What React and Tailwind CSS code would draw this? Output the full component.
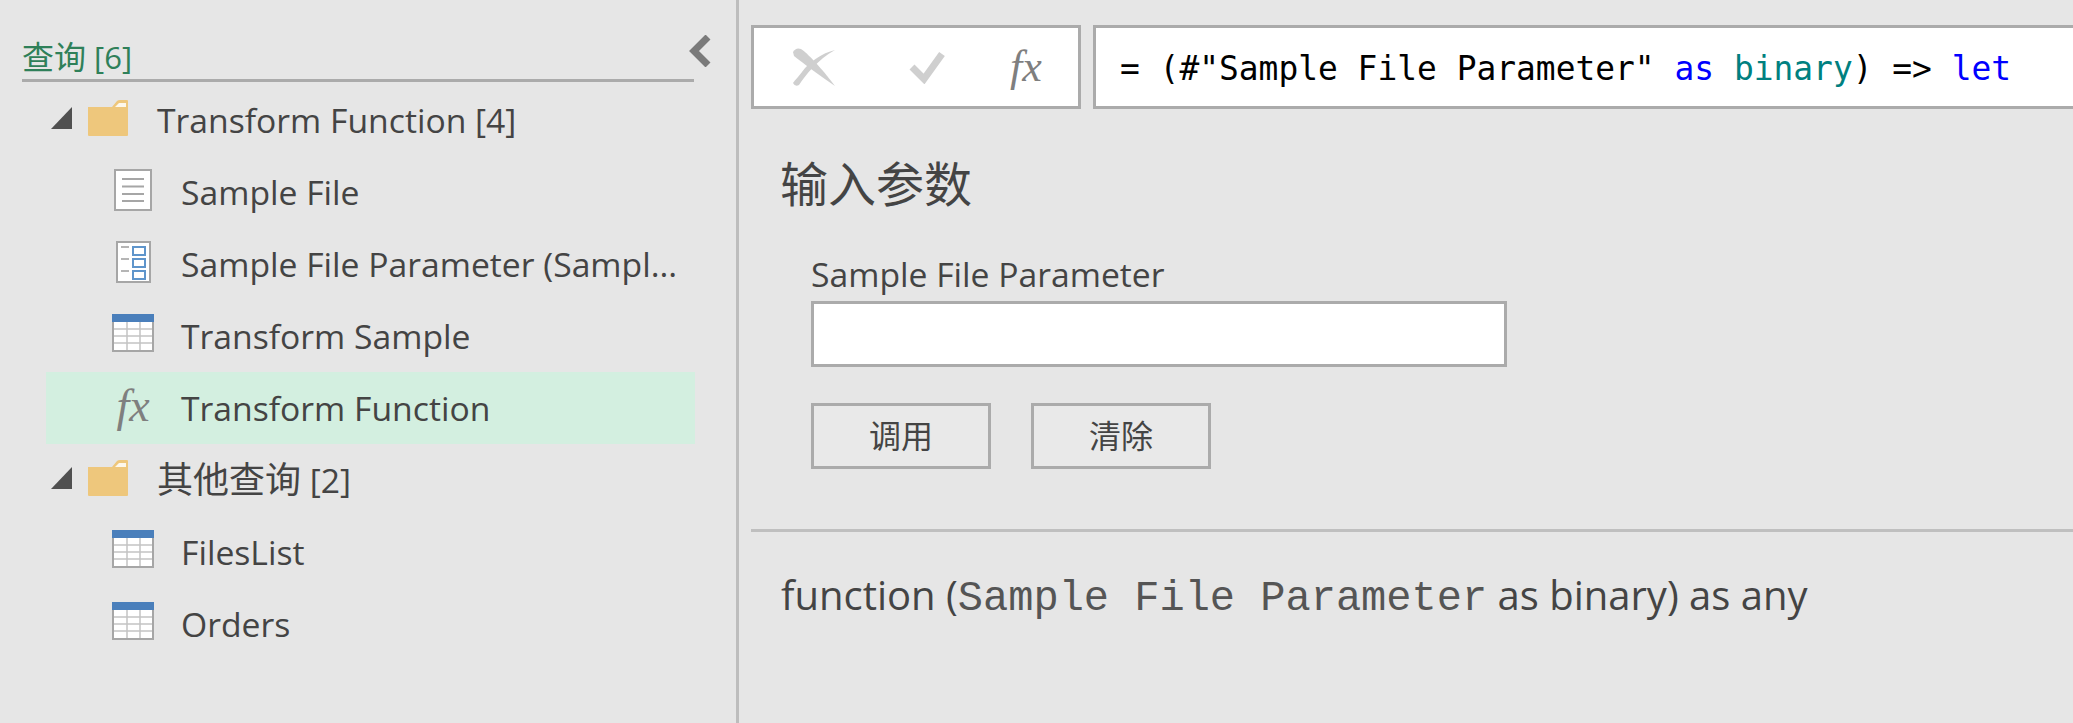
import React from "react";

const UI_FONT = "font-['Open_Sans','Noto_Sans_CJK_SC',sans-serif]";

const FolderIcon = () => (
  <svg width="40" height="36" viewBox="0 0 40 36" aria-hidden="true">
    <path d="M0 7 H24 L29 1 Q30 0 32 0 H39 Q40 0 40 1 V35 Q40 36 39 36 H1 Q0 36 0 35 Z" fill="#eec77c" />
    <path d="M27 7 L31 3 H38 V7 Z" fill="#fdf8ec" />
  </svg>
);

const Caret = () => (
  <svg width="21" height="22" viewBox="0 0 21 22" aria-hidden="true">
    <path d="M21 0 V22 H0 Z" fill="#505050" />
  </svg>
);

const DocIcon = () => (
  <svg width="38" height="42" viewBox="0 0 38 42" aria-hidden="true">
    <rect x="1" y="1" width="36" height="40" fill="#ffffff" stroke="#a6a6a6" strokeWidth="2" />
    <path d="M8 10 H30 M8 17.5 H30 M8 25 H30 M8 32 H30" stroke="#a6a6a6" strokeWidth="2" />
  </svg>
);

const ParamIcon = () => (
  <svg width="35" height="42" viewBox="0 0 35 42" aria-hidden="true">
    <rect x="1" y="1" width="33" height="40" fill="#ffffff" stroke="#a6a6a6" strokeWidth="2" />
    <path d="M5 6 H13 M5 18 H13 M5 30 H13" stroke="#b5b5b5" strokeWidth="2" />
    <path d="M17 6 H29 V14 H17 Z M17 18 H29 V26 H17 Z M17 30 H29 V38 H17 Z" fill="#ffffff" stroke="#5f95cb" strokeWidth="2" />
  </svg>
);

const TableIcon = () => (
  <svg width="42" height="38" viewBox="0 0 42 38" aria-hidden="true">
    <rect x="0" y="0" width="42" height="38" fill="#a6a6a6" />
    <rect x="0" y="0" width="42" height="8" fill="#4a7fbb" />
    <rect x="2" y="8" width="38" height="28" fill="#ffffff" />
    <path d="M15 8 V36 M28 8 V36 M2 15 H40 M2 22 H40 M2 29 H40" stroke="#c4c4c4" strokeWidth="1.5" />
  </svg>
);

const FxMark = ({ className }) => (
  <span className={`font-['Liberation_Serif',serif] italic text-[#7f7f7f] ${className}`}>fx</span>
);

const QueryRow = ({ icon, iconShift = "-mt-[4px]", label, active }) => (
  <div className={`flex h-[72px] w-[649px] items-center ${active ? "bg-[#d3efe0]" : ""}`}>
    <div className={`ml-[66px] flex w-[42px] justify-center ${iconShift}`}>{icon}</div>
    <span className="ml-[27px] whitespace-nowrap">{label}</span>
  </div>
);

const GroupRow = ({ children }) => (
  <div className="flex h-[72px] items-center">
    <div className="ml-[5px] -mt-[4px] flex items-center">
      <Caret />
    </div>
    <div className="ml-[16px] -mt-[4px]">
      <FolderIcon />
    </div>
    <span className="ml-[29px] whitespace-nowrap">{children}</span>
  </div>
);

const Sidebar = () => (
  <aside className="relative h-[723px] w-[739px] shrink-0 border-r-[3px] border-[#bdbdbd] text-[33.7px] text-[#444444]">
    <div className="ml-[22px] flex h-[82px] w-[672px] items-end border-b-[3px] border-[#ababab]">
      <span className="text-[31px] leading-[44px] text-[#2f8059]">
        <span className="text-[32px]">查询</span> [6]
      </span>
    </div>
    <svg className="absolute left-[689px] top-[35px]" width="23" height="32" viewBox="0 0 23 32" aria-hidden="true">
      <path d="M19 2 L5 16 L19 30" fill="none" stroke="#7a7a7a" strokeWidth="7" />
    </svg>
    <div className="ml-[46px] mt-[2px]">
      <GroupRow>Transform Function [4]</GroupRow>
      <QueryRow icon={<DocIcon />} label="Sample File" />
      <QueryRow icon={<ParamIcon />} label="Sample File Parameter (Sampl..." />
      <QueryRow icon={<TableIcon />} iconShift="-mt-[6px]" label="Transform Sample" />
      <QueryRow icon={<FxMark className="text-[46px] leading-none" />} label="Transform Function" active />
      <GroupRow>
        <span className="text-[36px]">其他查询</span> [2]
      </GroupRow>
      <QueryRow icon={<TableIcon />} iconShift="-mt-[6px]" label="FilesList" />
      <QueryRow icon={<TableIcon />} iconShift="-mt-[6px]" label="Orders" />
    </div>
  </aside>
);

const FormulaBar = () => (
  <div className="flex h-[84px] gap-[12px]">
    <div className="flex w-[330px] shrink-0 items-center border-[3px] border-[#ababab] bg-white">
      <svg className="ml-[38px]" width="44" height="40" viewBox="0 0 44 40" aria-hidden="true">
        <path d="M1 5 Q4 0 9 2 C18 8 34 27 43 39 C30 30 12 17 2 9 Z" fill="#cfcfcf" />
        <path d="M43 3 C30 6 17 15 10 25 C7 29 3 33 1 36 Q3 40 7 38 C13 29 26 12 43 3 Z" fill="#cfcfcf" />
      </svg>
      <svg className="ml-[73px]" width="37" height="34" viewBox="0 0 37 34" aria-hidden="true">
        <path d="M3 17 L15 29 L33 4" fill="none" stroke="#cfcfcf" strokeWidth="7" />
      </svg>
      <FxMark className="ml-[64px] text-[44px] leading-none" />
    </div>
    <div className="flex flex-1 items-center overflow-hidden whitespace-pre border-[3px] border-r-0 border-[#ababab] bg-white pl-[24px] pt-[3px] font-['DejaVu_Sans_Mono',monospace] text-[32.9px] text-black">
      <span>= (#"Sample File Parameter" </span>
      <span className="text-[#0000ff]">as</span>
      <span> </span>
      <span className="text-[#008080]">binary</span>
      <span>) =&gt; </span>
      <span className="text-[#0000ff]">let</span>
    </div>
  </div>
);

const InvokeButton = ({ label }) => (
  <button type="button" className="h-[66px] w-[180px] border-[3px] border-[#ababab] bg-[#e9e9e9] text-[32px]">
    {label}
  </button>
);

const ParameterForm = () => (
  <div className="ml-[29px]">
    <h2 className="mt-[44px] text-[48px] font-normal leading-[62px]">输入参数</h2>
    <div className="ml-[31px]">
      <div className="mt-[37px] text-[33.7px] leading-[44px]">Sample File Parameter</div>
      <div className="mt-[5px] h-[66px] w-[696px] border-[3px] border-[#ababab] bg-white" />
      <div className="mt-[36px] flex gap-[40px]">
        <InvokeButton label="调用" />
        <InvokeButton label="清除" />
      </div>
    </div>
  </div>
);

const App = () => (
  <div className={`flex h-[723px] w-[2073px] overflow-hidden bg-[#e6e6e6] text-[#444444] ${UI_FONT}`}>
    <Sidebar />
    <main className="min-w-0 flex-1 pl-[12px] pt-[25px]">
      <FormulaBar />
      <ParameterForm />
      <div className="mt-[60px] h-[3px] bg-[#bfbfbf]" />
      <div className="ml-[30px] mt-[36px] flex items-baseline whitespace-pre text-[40px] leading-[54px]">
        <span>function (</span>
        <span className="font-['Liberation_Mono',monospace] text-[42px] text-[#555555]">Sample File Parameter</span>
        <span> as binary) as any</span>
      </div>
    </main>
  </div>
);

export default App;
